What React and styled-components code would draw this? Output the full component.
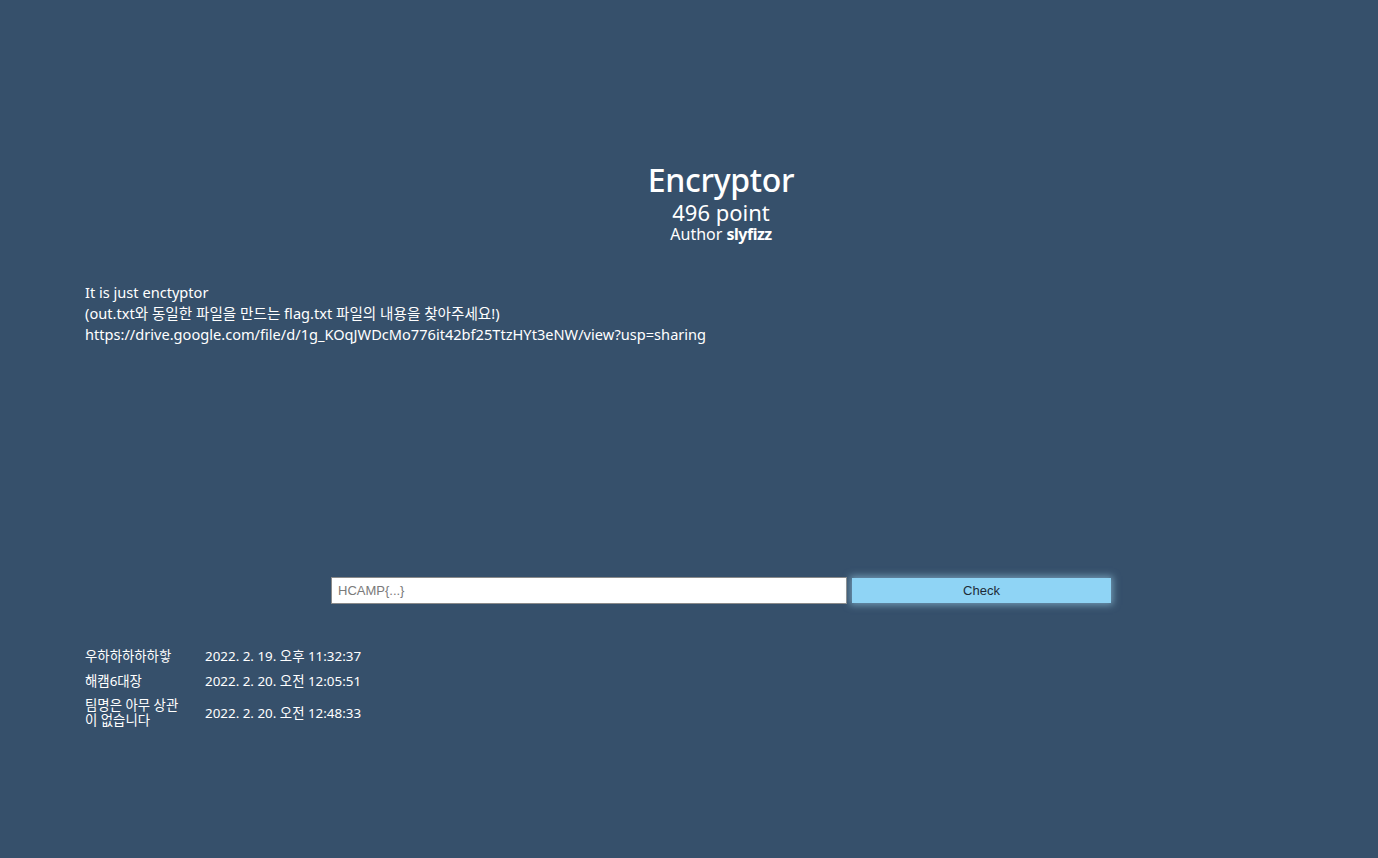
import React from "react";
import styled, { createGlobalStyle } from "styled-components";

const GlobalStyle = createGlobalStyle`
  html, body {
    margin: 0;
    padding: 0;
    background: #36506b;
  }
  body {
    font-family: "Noto Sans", "Noto Sans CJK KR", sans-serif;
    color: #ffffff;
  }
`;

// 왼쪽 64px은 비어 있는 사이드 영역
const Page = styled.div`
  min-height: 858px;
  padding-left: 64px;
  box-sizing: border-box;
`;

const Main = styled.main`
  padding: 160px 21px 0 21px;
`;

const Header = styled.header`
  display: flex;
  flex-direction: column;
  align-items: center;
`;

const Title = styled.h1`
  margin: 0;
  font-size: 32px;
  font-weight: 500;
  line-height: 40px;
  letter-spacing: -0.3px;
`;

const Points = styled.div`
  font-size: 22px;
  line-height: 24px;
`;

const Author = styled.div`
  font-size: 16px;
  line-height: 20px;

  b {
    font-weight: 700;
    letter-spacing: -0.5px;
  }
`;

const Description = styled.div`
  margin-top: 38px;
  font-size: 14.6px;
  line-height: 21px;
`;

const Line = styled.p`
  margin: 0;
`;

const FlagForm = styled.form`
  width: 780px;
  margin: 232px auto 0 auto;
  display: flex;
  align-items: center;
  gap: 5px;
`;

const FlagInput = styled.input`
  flex: 0 0 516px;
  height: 27px;
  box-sizing: border-box;
  border: 1px solid #8a8a8a;
  padding: 0 6px;
  font-family: "Liberation Sans", Arial, sans-serif;
  font-size: 13px;
  color: #333;
  background: #fff;
  outline: none;

  &::placeholder {
    color: #7a7a7a;
  }
`;

const CheckButton = styled.button`
  flex: 1;
  height: 25px;
  border: none;
  background: #8fd4f5;
  color: #1d2b38;
  font-family: "Liberation Sans", Arial, sans-serif;
  font-size: 13px;
  box-shadow: 0 0 7px 2px rgba(160, 215, 240, 0.55);
  cursor: pointer;
`;

const Solves = styled.table`
  margin-top: 40px;
  border-collapse: collapse;
  font-size: 13.4px;
`;

const NameCell = styled.td`
  width: 100px;
  padding: 4px 20px 4px 0;
  line-height: 15px;
  vertical-align: middle;
`;

const TimeCell = styled.td`
  padding: 4px 0;
  line-height: 17px;
  vertical-align: middle;
`;

const solves = [
  { name: "우하하하하하핳", time: "2022. 2. 19. 오후 11:32:37" },
  { name: "해캠6대장", time: "2022. 2. 20. 오전 12:05:51" },
  { name: "팀명은 아무 상관이 없습니다", time: "2022. 2. 20. 오전 12:48:33" },
];

export default function App() {
  return (
    <>
      <GlobalStyle />
      <Page>
        <Main>
          <Header>
            <Title>Encryptor</Title>
            <Points>496 point</Points>
            <Author>
              Author <b>slyfizz</b>
            </Author>
          </Header>

          <Description>
            <Line>It is just enctyptor</Line>
            <Line>(out.txt와 동일한 파일을 만드는 flag.txt 파일의 내용을 찾아주세요!)</Line>
            <Line>https://drive.google.com/file/d/1g_KOqJWDcMo776it42bf25TtzHYt3eNW/view?usp=sharing</Line>
          </Description>

          <FlagForm onSubmit={(e) => e.preventDefault()}>
            <FlagInput placeholder="HCAMP{...}" />
            <CheckButton type="submit">Check</CheckButton>
          </FlagForm>

          <Solves>
            <tbody>
              {solves.map((s) => (
                <tr key={s.name}>
                  <NameCell>{s.name}</NameCell>
                  <TimeCell>{s.time}</TimeCell>
                </tr>
              ))}
            </tbody>
          </Solves>
        </Main>
      </Page>
    </>
  );
}
